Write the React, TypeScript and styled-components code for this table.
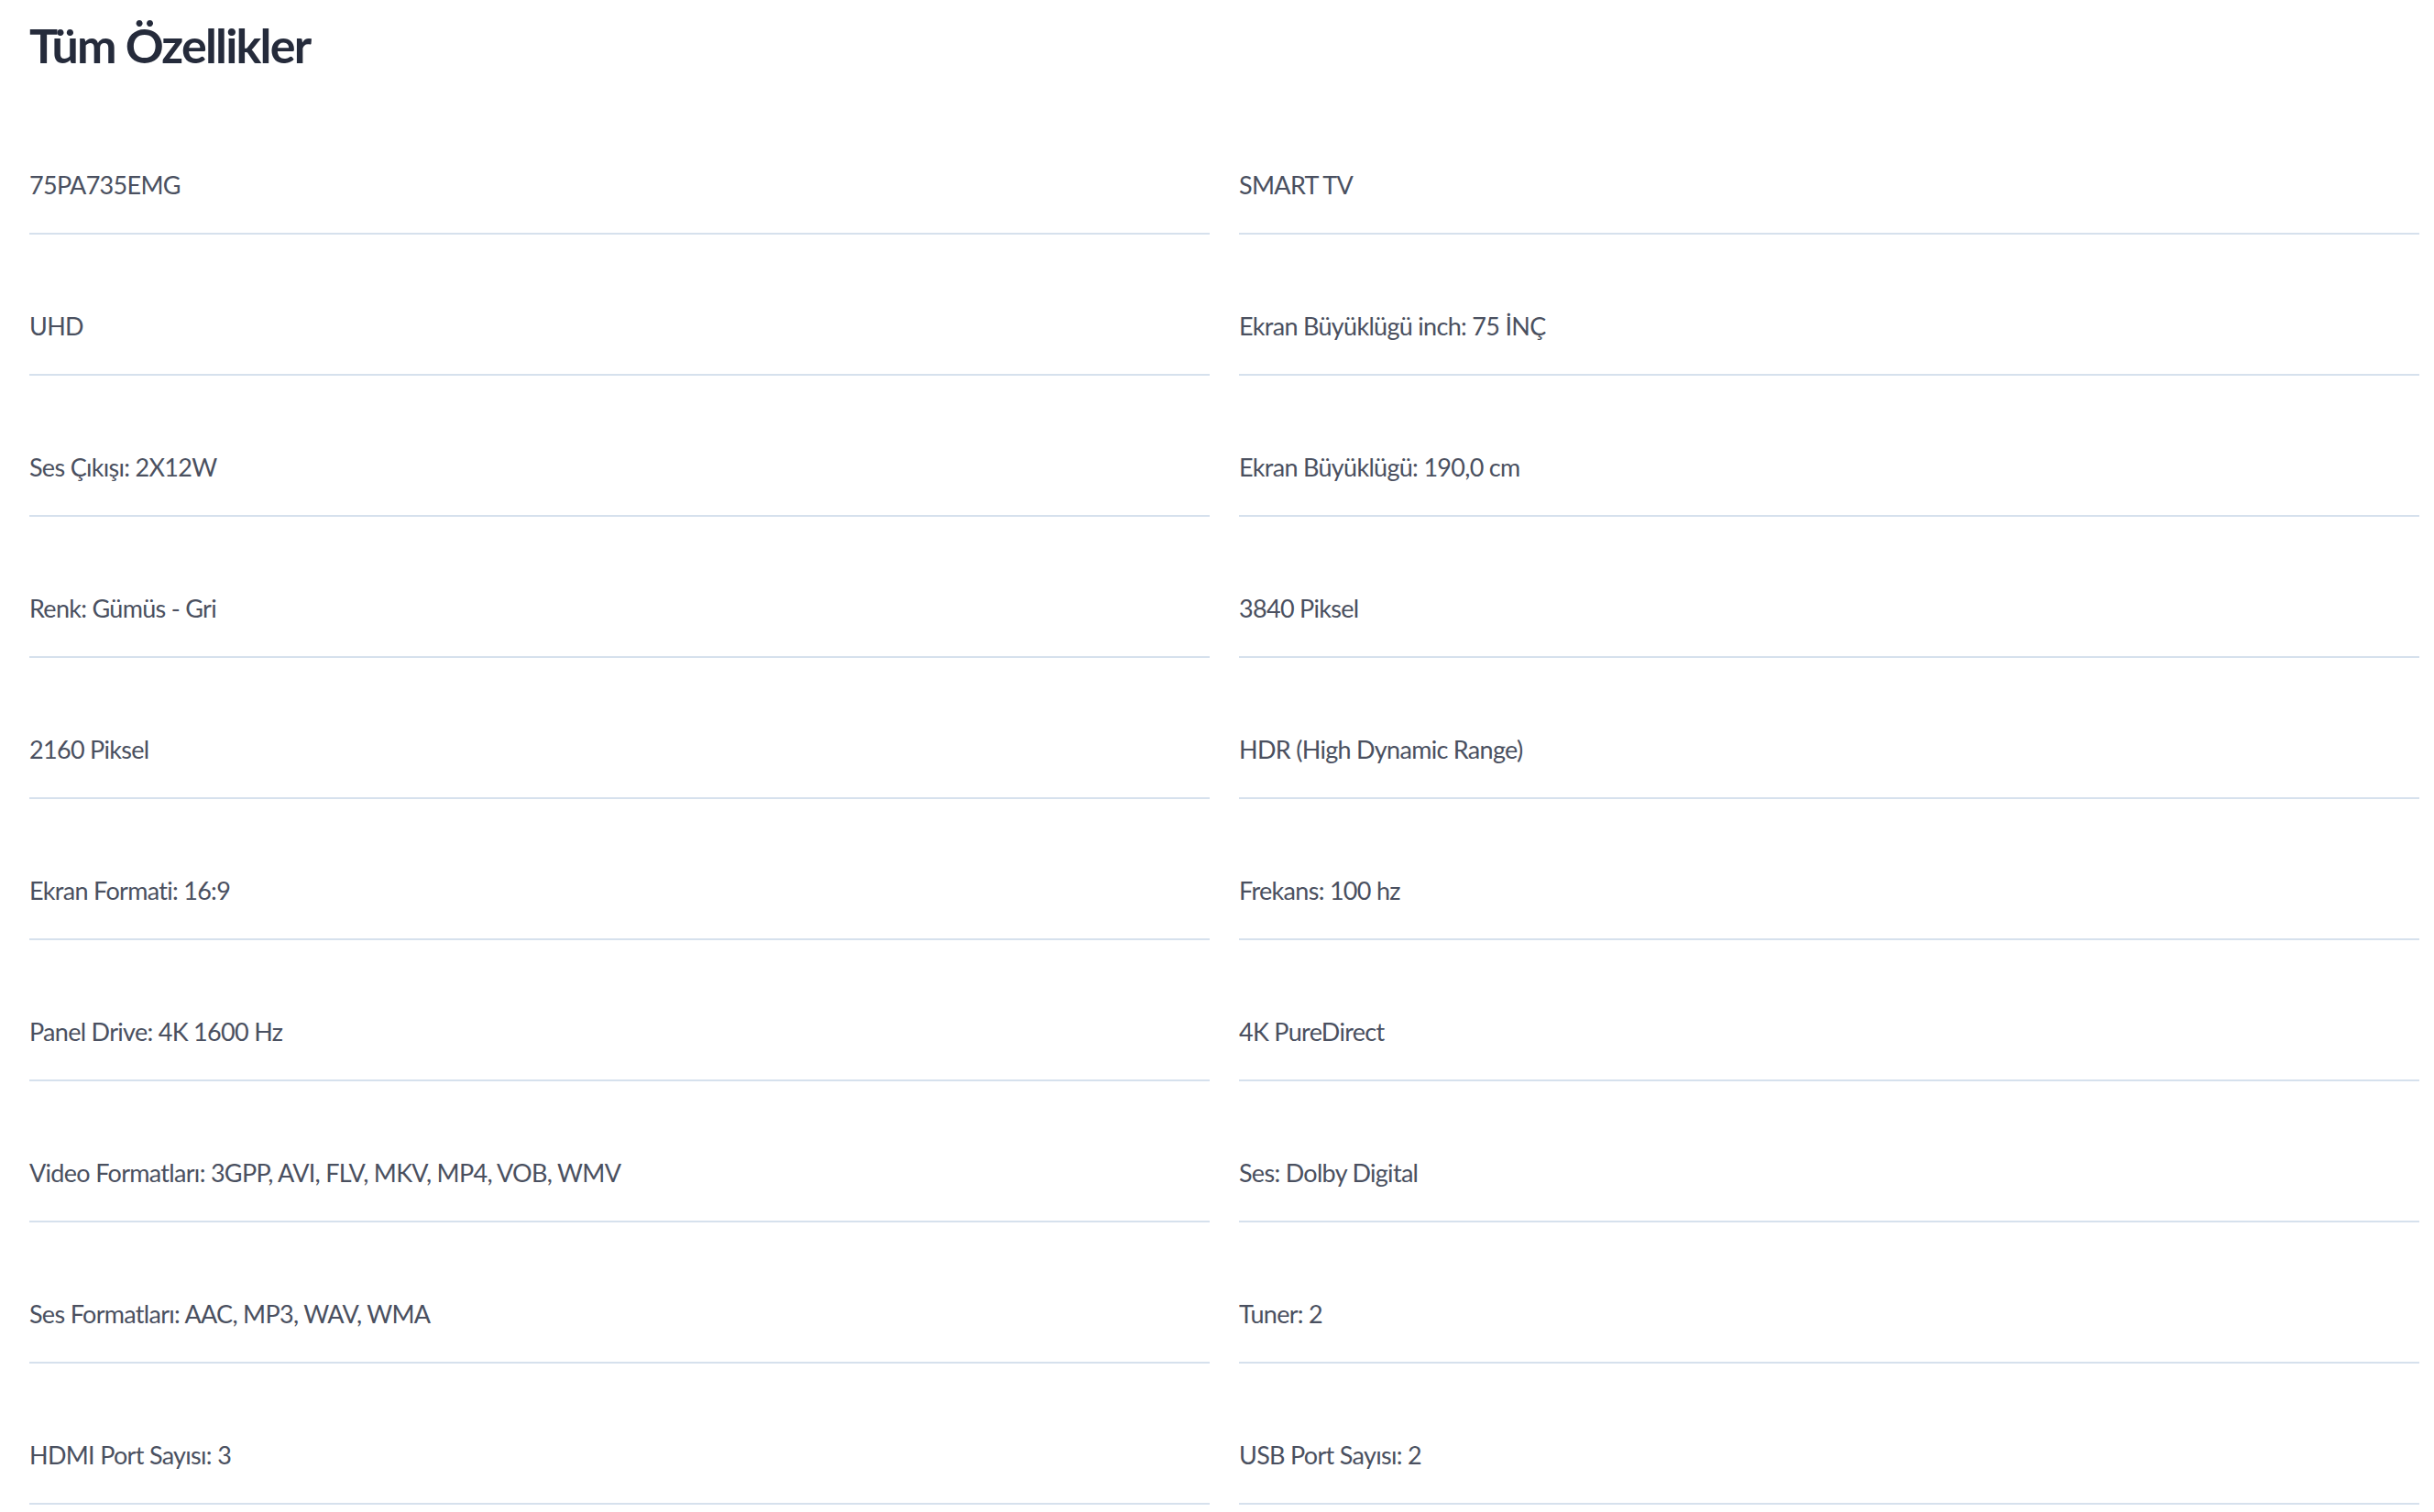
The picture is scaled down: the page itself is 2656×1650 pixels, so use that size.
import React from "react";
import styled, { createGlobalStyle } from "styled-components";

const GlobalStyle = createGlobalStyle`
  html, body {
    margin: 0;
    padding: 0;
    background: #ffffff;
  }
  body {
    font-family: Lato, "Open Sans", "Noto Sans", sans-serif;
  }
`;

const Page = styled.section`
  padding: 18px 16px 0 32px;
  box-sizing: border-box;
  width: 2656px;
`;

const Title = styled.h1`
  margin: 0 0 22px 0;
  font-family: Lato, "Open Sans", sans-serif;
  font-weight: 700;
  font-size: 52px;
  line-height: 62px;
  color: #252b3b;
  letter-spacing: -1.8px;
`;

const SpecGrid = styled.ul`
  list-style: none;
  margin: 0;
  padding: 0;
  display: grid;
  grid-template-columns: 1fr 1fr;
  column-gap: 32px;
`;

const SpecItem = styled.li`
  padding: 84px 0 36px 0;
  border-bottom: 2px solid #d6e1ed;
  font-family: Lato, "Open Sans", sans-serif;
  font-size: 27px;
  line-height: 32px;
  letter-spacing: -0.7px;
  color: #4a5060;
`;

const specs = [
  "75PA735EMG",
  "SMART TV",
  "UHD",
  "Ekran Büyüklügü inch: 75 İNÇ",
  "Ses Çıkışı: 2X12W",
  "Ekran Büyüklügü: 190,0 cm",
  "Renk: Gümüs - Gri",
  "3840 Piksel",
  "2160 Piksel",
  "HDR (High Dynamic Range)",
  "Ekran Formati: 16:9",
  "Frekans: 100 hz",
  "Panel Drive: 4K 1600 Hz",
  "4K PureDirect",
  "Video Formatları: 3GPP, AVI, FLV, MKV, MP4, VOB, WMV",
  "Ses: Dolby Digital",
  "Ses Formatları: AAC, MP3, WAV, WMA",
  "Tuner: 2",
  "HDMI Port Sayısı: 3",
  "USB Port Sayısı: 2",
];

export default function App() {
  return (
    <>
      <GlobalStyle />
      <Page>
        <Title>Tüm Özellikler</Title>
        <SpecGrid>
          {specs.map((s) => (
            <SpecItem key={s}>{s}</SpecItem>
          ))}
        </SpecGrid>
      </Page>
    </>
  );
}
